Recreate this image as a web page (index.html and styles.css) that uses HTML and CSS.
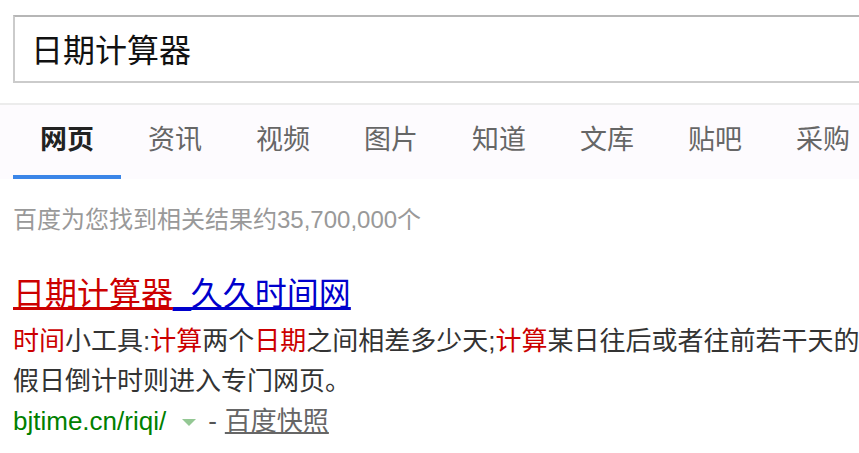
FILE: index.html
```html
<!DOCTYPE html>
<html lang="zh-CN">
<head>
    <meta charset="UTF-8">
    <meta name="viewport" content="width=device-width, initial-scale=1.0">
    <title>日期计算器 - 百度搜索</title>
    <link rel="stylesheet" href="styles.css">
</head>
<body>
    <div class="page">
        <!-- 搜索框 -->
        <div class="search-box">日期计算器</div>

        <!-- 搜索分类 -->
        <div class="tabs">
            <a class="tab active" href="#">网页</a>
            <a class="tab" href="#">资讯</a>
            <a class="tab" href="#">视频</a>
            <a class="tab" href="#">图片</a>
            <a class="tab" href="#">知道</a>
            <a class="tab" href="#">文库</a>
            <a class="tab" href="#">贴吧</a>
            <a class="tab" href="#">采购</a>
        </div>

        <div class="results">
            <p class="count">百度为您找到相关结果约35,700,000个</p>

            <!-- 搜索结果 -->
            <div class="result">
                <h3 class="result-title"><a href="#"><em>日期计算器</em>_久久时间网</a></h3>
                <p class="result-abstract"><em>时间</em>小工具:<em>计算</em>两个<em>日期</em>之间相差多少天;<em>计算</em>某日往后或者往前若干天的假日倒计时则进入专门网页。</p>
                <div class="result-url">
                    <span class="url">bjtime.cn/riqi/</span>
                    <span class="arrow"></span>
                    <span class="sep">-</span>
                    <a class="snapshot" href="#">百度快照</a>
                </div>
            </div>
        </div>
    </div>
</body>
</html>
```

FILE: styles.css
```css
/* 页面整体 */
body {
    margin: 0;
    overflow: hidden;
    background: #fff;
    font-family: "Liberation Sans", "Noto Sans CJK SC", sans-serif;
    color: #333;
}

.page {
    width: 900px;
}

/* 搜索框 */
.search-box {
    margin: 15px 0 0 13px;
    height: 60px;
    padding: 4px 0 0 16px;
    border: 2px solid #cbcbcb;
    border-top-color: #b6b6b6;
    border-right: none;
    font-size: 32px;
    line-height: 60px;
    color: #111;
}

/* 分类标签 */
.tabs {
    display: flex;
    margin-top: 20px;
    padding-left: 13px;
    border-top: 2px solid #ececec;
    background: #fdfbfe;
    overflow: hidden;
}

.tab {
    flex: 0 0 108px;
    text-align: center;
    font-size: 27px;
    line-height: 70px;
    color: #666;
    text-decoration: none;
    border-bottom: 4px solid transparent;
}

.tab.active {
    color: #222;
    font-weight: bold;
    border-bottom-color: #3b86e8;
}

/* 结果区 */
.results {
    width: 855px;
    padding-left: 13px;
}

.count {
    margin: 26px 0 0;
    font-size: 24px;
    line-height: 30px;
    color: #999;
}

.result-title {
    margin: 39px 0 0;
    font-size: 32px;
    font-weight: normal;
    line-height: 40px;
}

.result-title a {
    color: #00c;
    text-decoration: underline;
}

.result-title em,
.result-abstract em {
    font-style: normal;
    color: #c00;
}

.result-title em {
    text-decoration: underline;
}

.result-abstract {
    margin: 7px 0 0;
    font-size: 26px;
    line-height: 40px;
    color: #333;
}

.result-url {
    display: flex;
    align-items: center;
    font-size: 26px;
    line-height: 40px;
}

.url {
    color: #008000;
}

.arrow {
    width: 0;
    height: 0;
    margin: 3px 12px 0 16px;
    border-left: 7px solid transparent;
    border-right: 7px solid transparent;
    border-top: 7px solid #94c894;
}

.sep {
    color: #555;
}

.snapshot {
    margin-left: 8px;
    color: #666;
    text-decoration: underline;
}
```
